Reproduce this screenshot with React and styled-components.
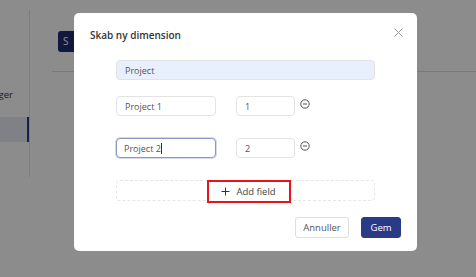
import styled, { createGlobalStyle } from 'styled-components';

const GlobalStyle = createGlobalStyle`
    html, body {
        margin: 0;
        padding: 0;
        background: #ffffff;
        font-family: "Open Sans", "Noto Sans", sans-serif;
    }
`

// 뒤쪽 페이지
const Page = styled.div`
    display: flex;
    width: 476px;
    height: 277px;
    overflow: hidden;
`
const Sidebar = styled.div`
    width: 30px;
    margin-top: 10px;
    height: 167px;
    border-right: 1px solid #e4e4e4;
    display: flex;
    flex-direction: column;
    padding-top: 78px;
    box-sizing: border-box;
`
const SideItem = styled.div`
    font-size: 9.5px;
    color: #333;
    height: 18px;
    line-height: 14px;
    white-space: nowrap;
    direction: rtl;
    overflow: hidden;
    text-align: right;
    padding-right: 16px;
`
const SideActive = styled.div`
    margin-top: 11px;
    height: 25px;
    width: 29px;
    background: #e9ebf4;
    border-right: 2px solid #2b3a87;
    box-sizing: border-box;
`
const Main = styled.div`
    flex: 1;
    padding-top: 31px;
    padding-left: 28px;
`
const PageButton = styled.div`
    width: 60px;
    height: 21px;
    border-radius: 3px;
    background: #1f2c72;
    color: #fff;
    font-size: 10px;
    line-height: 21px;
    padding-left: 5px;
`
const PageLine = styled.div`
    margin-top: 19px;
    margin-left: -6px;
    height: 1px;
    background: #dcdcdc;
`

// 모달
const Overlay = styled.div`
    position: fixed;
    inset: 0;
    background: rgba(0, 0, 0, 0.45);
`
const Modal = styled.div`
    position: fixed;
    left: 74px;
    top: 13px;
    width: 343px;
    height: 238px;
    background: #fff;
    border-radius: 5px;
    box-sizing: border-box;
    padding: 14px 16px 13px 16px;
    display: flex;
    flex-direction: column;
`
const Header = styled.div`
    display: flex;
    justify-content: space-between;
    align-items: flex-start;
    height: 19px;
`
const Title = styled.div`
    font-size: 10px;
    font-weight: 600;
    color: #333;
    line-height: 14px;
    padding-top: 1px;
`
const Close = styled.svg`
    width: 9px;
    height: 9px;
    margin-top: 1px;
    margin-right: -2px;
`
const Form = styled.div`
    margin-left: 26px;
    width: 259px;
    margin-top: 14px;
    display: flex;
    flex-direction: column;
`
const Field = styled.div`
    box-sizing: border-box;
    height: 20px;
    width: ${p => p.$w || '100%'};
    border: ${p => p.$focus ? '1.5px solid #8e96bf' : '1px solid #e3e3e3'};
    box-shadow: ${p => p.$focus ? '0 0 0 1px #d6daea' : 'none'};
    background: ${p => p.$fill ? '#e8f0fe' : '#fff'};
    border-radius: 4px;
    font-size: 9px;
    color: #555;
    padding-left: ${p => p.$focus ? '7px' : '8px'};
    display: flex;
    align-items: center;
`
const Caret = styled.span`
    display: inline-block;
    width: 1px;
    height: 11px;
    background: #333;
`
const Row = styled.div`
    display: flex;
    align-items: flex-start;
    margin-top: ${p => p.$mt};
`
const NumWrap = styled.div`
    margin-left: 20px;
    display: flex;
    align-items: flex-start;
`
const MinusIcon = styled.svg`
    width: 10px;
    height: 10px;
    margin-left: 5px;
    margin-top: 3px;
`
const AddBox = styled.div`
    margin-top: 22px;
    height: 21px;
    border: 1px dashed #e6e6e6;
    border-radius: 4px;
    box-sizing: border-box;
    display: flex;
    justify-content: center;
    align-items: flex-start;
`
const AddLabel = styled.div`
    margin-top: -1px;
    margin-left: 6px;
    width: 84px;
    height: 23px;
    border: 2px solid #e8141b;
    box-sizing: border-box;
    display: flex;
    align-items: center;
    justify-content: center;
    gap: 6px;
    font-size: 9.5px;
    color: #444;
    background: #fff;
`
const Footer = styled.div`
    margin-top: auto;
    display: flex;
    justify-content: flex-end;
    gap: 12px;
`
const Button = styled.div`
    box-sizing: border-box;
    height: 21px;
    width: ${p => p.$w};
    border-radius: 3px;
    font-size: 9.5px;
    display: flex;
    align-items: center;
    justify-content: center;
    background: ${p => p.$primary ? '#2b3a87' : '#fff'};
    color: ${p => p.$primary ? '#fff' : '#555'};
    border: 1px solid ${p => p.$primary ? '#2b3a87' : '#dedede'};
`

const Minus = () => (
    <MinusIcon viewBox="0 0 10 10">
        <circle cx="5" cy="5" r="4.2" fill="none" stroke="#555" strokeWidth="1" />
        <line x1="3" y1="5" x2="7" y2="5" stroke="#555" strokeWidth="1" />
    </MinusIcon>
)

const App = () => {
    return (
        <>
            <GlobalStyle />
            <Page>
                <Sidebar>
                    <SideItem>Indstillinger</SideItem>
                    <SideActive />
                </Sidebar>
                <Main>
                    <PageButton>S</PageButton>
                    <PageLine />
                </Main>
            </Page>
            <Overlay />
            <Modal>
                <Header>
                    <Title>Skab ny dimension</Title>
                    <Close viewBox="0 0 9 9">
                        <path d="M0.5 0.5 L8.5 8.5 M8.5 0.5 L0.5 8.5" stroke="#999" strokeWidth="1" />
                    </Close>
                </Header>
                <Form>
                    <Field $fill>Project</Field>
                    <Row $mt="16px">
                        <Field $w="100px">Project 1</Field>
                        <NumWrap>
                            <Field $w="59px">1</Field>
                            <Minus />
                        </NumWrap>
                    </Row>
                    <Row $mt="22px">
                        <Field $w="100px" $focus>Project 2<Caret /></Field>
                        <NumWrap>
                            <Field $w="59px">2</Field>
                            <Minus />
                        </NumWrap>
                    </Row>
                    <AddBox>
                        <AddLabel>
                            <svg width="9" height="9" viewBox="0 0 9 9">
                                <path d="M4.5 0.5 V8.5 M0.5 4.5 H8.5" stroke="#333" strokeWidth="1" />
                            </svg>
                            Add field
                        </AddLabel>
                    </AddBox>
                </Form>
                <Footer>
                    <Button $w="54px">Annuller</Button>
                    <Button $w="40px" $primary>Gem</Button>
                </Footer>
            </Modal>
        </>
    )
}
export default App;
